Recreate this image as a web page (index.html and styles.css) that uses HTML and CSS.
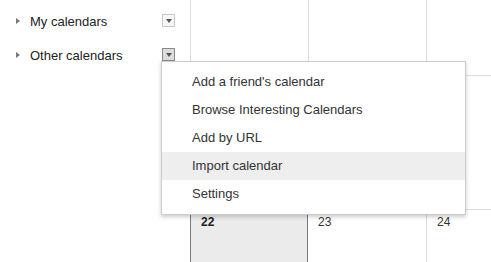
FILE: index.html
```html
<!DOCTYPE html>
<html>
<head>
<meta charset="utf-8">
<link rel="stylesheet" href="styles.css">
</head>
<body>
<div class="page">
  <aside class="sidebar">
    <div class="cal-row">
      <span class="arrow"></span>
      <span class="cal-label">My calendars</span>
      <span class="dd-btn"><span class="dd-tri"></span></span>
    </div>
    <div class="cal-row">
      <span class="arrow"></span>
      <span class="cal-label">Other calendars</span>
      <span class="dd-btn pressed"><span class="dd-tri"></span></span>
    </div>
  </aside>
  <main class="grid">
    <div class="cell r1"></div>
    <div class="cell r1"></div>
    <div class="cell r1"></div>
    <div class="cell r2"></div>
    <div class="cell r2"></div>
    <div class="cell r2"></div>
    <div class="cell r3 today"><span class="date bold">22</span></div>
    <div class="cell r3"><span class="date">23</span></div>
    <div class="cell r3"><span class="date">24</span></div>
  </main>
</div>
<div class="menu">
  <div class="menu-item">Add a friend's calendar</div>
  <div class="menu-item">Browse Interesting Calendars</div>
  <div class="menu-item">Add by URL</div>
  <div class="menu-item hover">Import calendar</div>
  <div class="menu-item">Settings</div>
</div>
</body>
</html>
```
FILE: styles.css
```css
html, body {
  margin: 0;
  padding: 0;
  background: #fff;
  font-family: "Liberation Sans", Arial, sans-serif;
  overflow: hidden;
}
.page {
  display: flex;
  width: 491px;
  height: 262px;
}
.sidebar {
  width: 190px;
  flex: none;
  padding-top: 4px;
  box-sizing: border-box;
}
.cal-row {
  height: 34px;
  display: flex;
  align-items: center;
  font-size: 13px;
  color: #222;
}
.arrow {
  width: 0;
  height: 0;
  border-left: 4px solid #777;
  border-top: 3px solid transparent;
  border-bottom: 3px solid transparent;
  margin-left: 16px;
  margin-right: 10px;
}
.cal-label {
  flex: 1;
}
.dd-btn {
  width: 11px;
  height: 11px;
  border: 1px solid #c8c8c8;
  background: #f6f6f6;
  display: flex;
  align-items: center;
  justify-content: center;
  margin-right: 15px;
  margin-top: -2px;
}
.dd-btn.pressed {
  border-color: #8a8a8a;
  background: #dcdcdc;
}
.dd-tri {
  width: 0;
  height: 0;
  border-top: 4px solid #555;
  border-left: 3px solid transparent;
  border-right: 3px solid transparent;
  margin-top: 1px;
}
.grid {
  flex: 1;
  display: grid;
  grid-template-columns: 118px 118px 1fr;
  grid-template-rows: 75px 134px 1fr;
}
.cell {
  border-left: 1px solid #dddddd;
}
.r2, .r3 {
  border-top: 1px solid #dddddd;
}
.cell.today {
  background: #ebebeb;
  border-left-color: #7a7a7a;
  border-top-color: #7a7a7a;
  border-right: 1px solid #7a7a7a;
}
.cell.today + .cell {
  border-left: none;
}
.date {
  display: block;
  font-size: 12px;
  color: #333;
  padding: 5px 0 0 10px;
}
.date.bold {
  font-weight: bold;
  color: #222;
}
.menu {
  position: absolute;
  left: 161px;
  top: 61px;
  width: 303px;
  padding: 6px 0;
  background: #fff;
  border: 1px solid rgba(0, 0, 0, 0.2);
  box-shadow: 0 2px 4px rgba(0, 0, 0, 0.2);
}
.menu-item {
  height: 28px;
  line-height: 28px;
  padding-left: 30px;
  font-size: 13px;
  color: #333;
}
.menu-item.hover {
  background: #eeeeee;
}
```
